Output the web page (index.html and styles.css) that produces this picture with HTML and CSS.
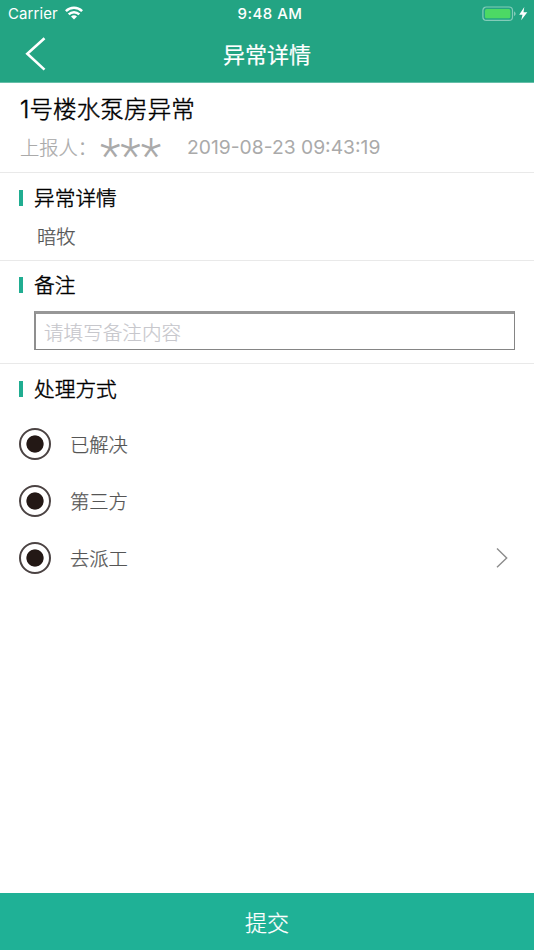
FILE: index.html
```html
<!DOCTYPE html>
<html lang="zh-CN">
<head>
<meta charset="utf-8">
<title>异常详情</title>
<link rel="stylesheet" href="styles.css">
</head>
<body>
<div class="screen">
  <header class="header">
    <div class="status">
      <div class="carrier"><span>Carrier</span>
        <svg class="wifi" width="18" height="14" viewBox="0 0 18 14" fill="none" stroke="#fff" stroke-width="2.5"><path d="M.9 5.2C5.5.7 12.5.7 17.1 5.2M3.7 8.3c3-2.9 7.6-2.9 10.6 0"/><path d="M6 10.4c1.8-1.5 4.2-1.5 6 0L9 13.4z" fill="#fff" stroke="none"/></svg>
      </div>
      <div class="time">9:48 AM</div>
      <div class="power">
        <svg width="46" height="16" viewBox="0 0 46 16"><rect x=".9" y="1" width="29.6" height="13.4" rx="3.5" fill="none" stroke="#83ccb9" stroke-width="1.2"/><rect x="3" y="3.1" width="25.4" height="9.2" rx="1.6" fill="#4cd964"/><path d="M32 5.2q3.4 2.5 0 5z" fill="#83ccb9"/><path d="M42.3.9 37.2 8.7h3.3l-1.3 5.6 6.1-8h-3.8z" fill="#fff"/></svg>
      </div>
    </div>
    <nav class="nav">
      <svg class="back" width="22" height="36" viewBox="0 0 22 36" fill="none" stroke="#fff" stroke-width="2.6"><path d="M19.5 1.3 2.3 16.8l17.2 15.8"/></svg>
      <h1>异常详情</h1>
    </nav>
  </header>
  <main>
    <section class="summary">
      <h2>1号楼水泵房异常</h2>
      <div class="meta"><span class="reporter">上报人：</span><span class="stars">***</span><span class="date">2019-08-23 09:43:19</span></div>
    </section>
    <section class="detail">
      <h3>异常详情</h3>
      <p>暗牧</p>
    </section>
    <section class="remark">
      <h3>备注</h3>
      <input type="text" placeholder="请填写备注内容">
    </section>
    <section class="method">
      <h3>处理方式</h3>
      <div class="option"><i class="radio"></i><span>已解决</span></div>
      <div class="option"><i class="radio"></i><span>第三方</span></div>
      <div class="option"><i class="radio"></i><span>去派工</span>
        <svg class="chevron" width="14" height="22" viewBox="0 0 14 22" fill="none" stroke="#8c8c8c" stroke-width="1.4"><path d="m2 1.5 9.7 9.4L2 20.3"/></svg>
      </div>
    </section>
  </main>
  <button class="submit" type="button">提交</button>
</div>
</body>
</html>
```

FILE: styles.css
```css
* { box-sizing: border-box; margin: 0; padding: 0; }
body { font-family: Inter, "Noto Sans CJK SC", sans-serif; background: #fff; color: #000; }
.screen { height: 950px; display: flex; flex-direction: column; overflow: hidden; }
.header { height: 83px; background: #23a483; border-bottom: 1px solid #65bea8; color: #fff; flex: none; }
.status { height: 27px; display: grid; grid-template-columns: 1fr auto 1fr; align-items: center; padding: 0 6px 0 8px; font-size: 15px; line-height: 27px; }
.carrier { display: flex; align-items: center; gap: 7px; }
.carrier span { letter-spacing: .1px; }
.wifi { margin-top: -2px; }
.time { font-weight: 500; font-size: 15px; letter-spacing: .5px; padding-left: 4px; }
.power { display: flex; justify-content: flex-end; }
.nav { height: 55px; display: grid; grid-template-columns: 1fr auto 1fr; align-items: center; padding: 0 25px; }
h1 { font-size: 22px; line-height: 32px; font-weight: 400; -webkit-text-stroke: .2px #fff; }
h2, h3 { font-weight: 300; -webkit-text-stroke: .45px #000; }
main { flex: 1; }
section { border-bottom: 1px solid #e9e9e9; }
.summary { height: 90px; padding: 11px 20px 0; }
h2 { font-size: 23.5px; line-height: 32px; letter-spacing: .15px; }
.meta { display: flex; height: 46px; line-height: 42px; color: #aaa; font-size: 19.3px; }
.reporter { width: 80px; flex: none; padding-top: 1px; font-weight: 300; -webkit-text-stroke: .2px #aaa; }
.stars { width: 87px; padding-top: 9px; font-family: Roboto, sans-serif; font-weight: 300; font-size: 48px; }
h3 { display: flex; align-items: center; font-size: 20.7px; line-height: 32px; height: 32px; }
h3::before { content: ""; width: 4px; height: 16px; margin: -2px 11px 0 0; background: #20ad91; }
.detail { height: 88px; padding: 10px 19px 0; }
.detail p { margin: 8px 0 0 18px; font-size: 19.3px; line-height: 28px; color: #555; font-weight: 300; -webkit-text-stroke: .25px #555; }
.remark { height: 103px; padding: 9px 19px 0; }
input { display: block; width: 481px; height: 39px; margin: 9px 0 0 15px; padding: 0 8px; border: 1px solid #858585; border-top: 3px solid #979797; border-left: 2px solid #8f8f8f; outline: 0; font: 300 19.6px "Noto Sans CJK SC", sans-serif; }
input::placeholder { color: #c7c7cc; opacity: 1; -webkit-text-stroke: .2px #c7c7cc; }
.method { padding: 10px 19px 0; border: 0; }
.method h3 { margin-bottom: 9px; }
.option { display: flex; align-items: center; height: 57px; font-size: 19.3px; color: #555; font-weight: 300; -webkit-text-stroke: .25px #555; }
.radio { width: 32px; height: 32px; border: 2px solid #4b4343; border-radius: 50%; margin-right: 19px; background: radial-gradient(circle, #231815 8.2px, #fff 9px); }
.chevron { margin-left: auto; margin-right: 6px; }
.submit { height: 57px; flex: none; border: 0; padding-bottom: 2px; background: #1fb196; color: #fff; font: 300 22px "Noto Sans CJK SC", sans-serif; -webkit-text-stroke: .25px #fff; }
```
